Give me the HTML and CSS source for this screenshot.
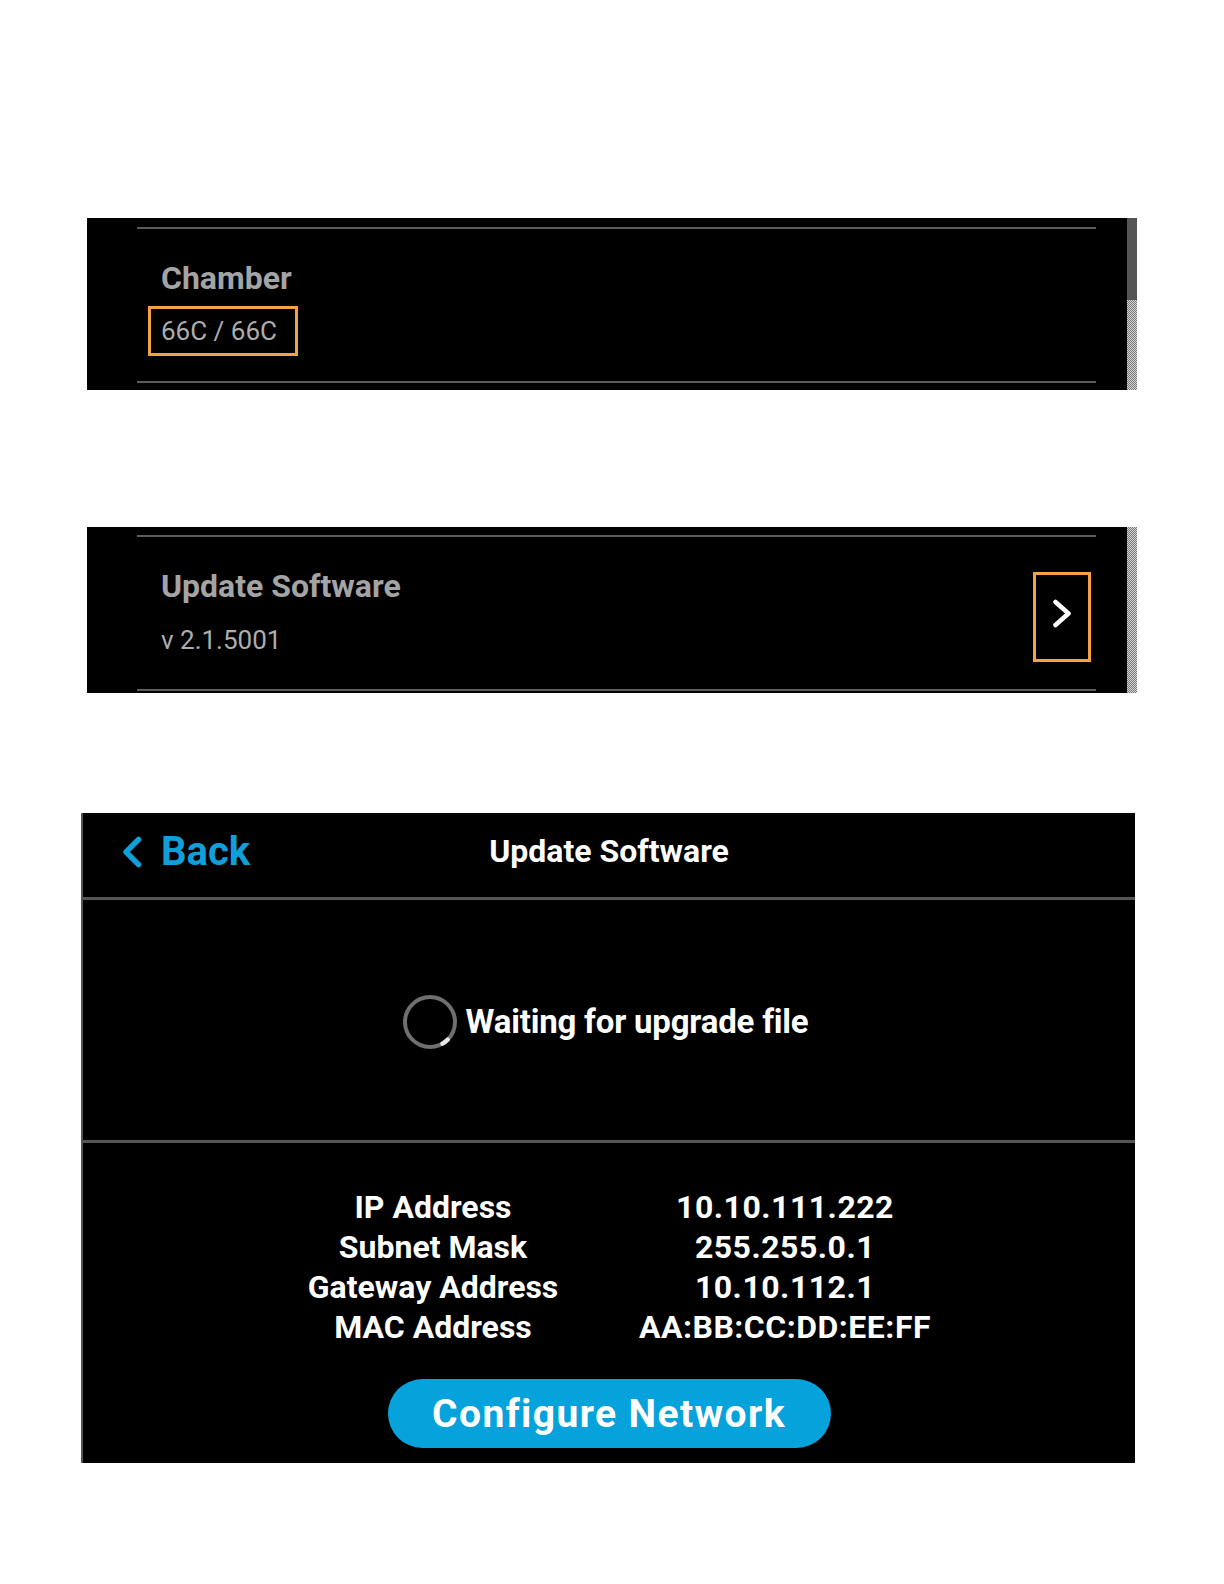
FILE: index.html
```html
<!DOCTYPE html>
<html>
<head>
<meta charset="utf-8">
<link rel="stylesheet" href="styles.css">
</head>
<body>
<div class="page">
  <section class="panel panel-chamber">
    <div class="list">
      <div class="item item-chamber">
        <div class="item-title">Chamber</div>
        <div class="value-box">66C / 66C</div>
      </div>
    </div>
    <div class="scrollbar"><div class="thumb"></div></div>
  </section>

  <section class="panel panel-update">
    <div class="list">
      <div class="item item-update">
        <div class="item-text">
          <div class="item-title">Update Software</div>
          <div class="item-value">v 2.1.5001</div>
        </div>
        <div class="chev-box">
          <svg class="chev" width="20" height="29" viewBox="0 0 20 29"><path d="M3.5 3 L16.5 14.5 L3.5 26" fill="none" stroke="#ffffff" stroke-width="4.5" stroke-linecap="round" stroke-linejoin="round"/></svg>
        </div>
      </div>
    </div>
    <div class="scrollbar"></div>
  </section>

  <section class="screen">
    <header class="screen-header">
      <div class="back">
        <svg class="back-icon" width="22" height="32" viewBox="0 0 22 32"><path d="M17.5 3.5 L5 16 L17.5 28.5" fill="none" stroke="#119fda" stroke-width="5.5" stroke-linecap="round" stroke-linejoin="round"/></svg>
        <span class="back-label">Back</span>
      </div>
      <div class="screen-title">Update Software</div>
      <div></div>
    </header>
    <div class="status">
      <svg class="spinner" width="56" height="56" viewBox="0 0 56 56">
        <circle cx="28" cy="28" r="25" fill="none" stroke="#6f6f6f" stroke-width="4"/>
        <path d="M45.7 45.7 A25 25 0 0 1 40.5 49.6" fill="none" stroke="#e8e8e8" stroke-width="4.5" stroke-linecap="round"/>
      </svg>
      <span class="status-text">Waiting for upgrade file</span>
    </div>
    <div class="network">
      <div class="net-grid">
        <div class="net-label">IP Address</div><div class="net-value">10.10.111.222</div>
        <div class="net-label">Subnet Mask</div><div class="net-value">255.255.0.1</div>
        <div class="net-label">Gateway Address</div><div class="net-value">10.10.112.1</div>
        <div class="net-label">MAC Address</div><div class="net-value">AA:BB:CC:DD:EE:FF</div>
      </div>
      <button class="config-btn">Configure Network</button>
    </div>
  </section>
</div>
</body>
</html>
```

FILE: styles.css
```css
html, body {
  margin: 0;
  padding: 0;
  background: #ffffff;
}

body {
  font-family: Roboto, "Noto Sans", sans-serif;
}

.page {
  display: flex;
  flex-direction: column;
  align-items: flex-start;
  padding-top: 218px;
}

/* ---------- list panels ---------- */
.panel {
  display: flex;
  margin-left: 87px;
  width: 1050px;
  background: #000000;
}

.panel-chamber {
  height: 172px;
}

.panel-update {
  margin-top: 137px;
  height: 166px;
}

.list {
  flex: 1;
  padding: 9px 31px 0 50px;
}

.panel-update .list {
  padding-top: 8px;
}

.item {
  border-top: 2px solid #5c5c5c;
  border-bottom: 2px solid #5c5c5c;
  padding-left: 24px;
  color: #a9a9a9;
}

.item-chamber {
  padding-top: 30px;
  padding-bottom: 25px;
}

.item-title {
  font-size: 32px;
  font-weight: 700;
  line-height: 38px;
  color: #a4a4a4;
}

.value-box {
  box-sizing: border-box;
  width: 150px;
  margin-top: 9px;
  margin-left: -13px;
  padding: 7px 0 7px 10px;
  border: 3px solid #f4a142;
  font-size: 26px;
  line-height: 30px;
  color: #adadad;
}

.item-update {
  display: flex;
  justify-content: space-between;
  align-items: flex-start;
}

.item-text {
  padding-top: 30px;
  padding-bottom: 34px;
}

.item-value {
  margin-top: 20px;
  font-size: 26px;
  line-height: 30px;
  color: #adadad;
}

.chev-box {
  box-sizing: border-box;
  width: 58px;
  height: 90px;
  margin-top: 35px;
  margin-right: 5px;
  border: 3px solid #f4a142;
  display: flex;
  align-items: center;
  justify-content: center;
}

.chev {
  display: block;
  margin-top: -8px;
}

.scrollbar {
  width: 10px;
  background: repeating-conic-gradient(#7a7a7a 0 25%, #d4d4d4 0 50%) 0 0 / 2px 2px;
}

.thumb {
  height: 82px;
  background: #555555;
}

/* ---------- update screen ---------- */
.screen {
  margin-top: 120px;
  margin-left: 81px;
  width: 1054px;
  height: 650px;
  box-sizing: border-box;
  border-left: 2px solid #555555;
  background: #000000;
  display: flex;
  flex-direction: column;
}

.screen-header {
  height: 84px;
  border-bottom: 3px solid #555555;
  display: grid;
  grid-template-columns: 1fr auto 1fr;
  align-items: start;
}

.back {
  display: flex;
  align-items: center;
  margin-top: 15px;
  padding-left: 38px;
  gap: 18px;
}

.back-icon {
  display: block;
}

.back-label {
  font-size: 40px;
  font-weight: 700;
  line-height: 48px;
  color: #119fda;
}

.screen-title {
  margin-top: 19px;
  font-size: 32px;
  font-weight: 700;
  line-height: 38px;
  color: #ffffff;
}

.status {
  height: 243px;
  box-sizing: border-box;
  border-bottom: 3px solid #555555;
  display: flex;
  align-items: center;
  justify-content: center;
  gap: 8px;
  padding-top: 4px;
  padding-right: 8px;
}

.spinner {
  display: block;
}

.status-text {
  font-size: 33px;
  font-weight: 700;
  line-height: 40px;
  letter-spacing: -0.2px;
  color: #ffffff;
}

.network {
  flex: 1;
  display: flex;
  flex-direction: column;
  align-items: center;
  padding-top: 44px;
}

.net-grid {
  display: grid;
  grid-template-columns: 352px 352px;
  text-align: center;
  font-size: 32px;
  font-weight: 700;
  line-height: 40px;
  color: #ffffff;
}

.net-value {
  letter-spacing: 0.5px;
}

.config-btn {
  margin-top: 32px;
  width: 443px;
  height: 69px;
  border: none;
  border-radius: 35px;
  background: #05a2dc;
  color: #ffffff;
  font-family: Roboto, "Noto Sans", sans-serif;
  font-size: 39px;
  font-weight: 700;
  letter-spacing: 1.4px;
  padding: 0;
}
```
